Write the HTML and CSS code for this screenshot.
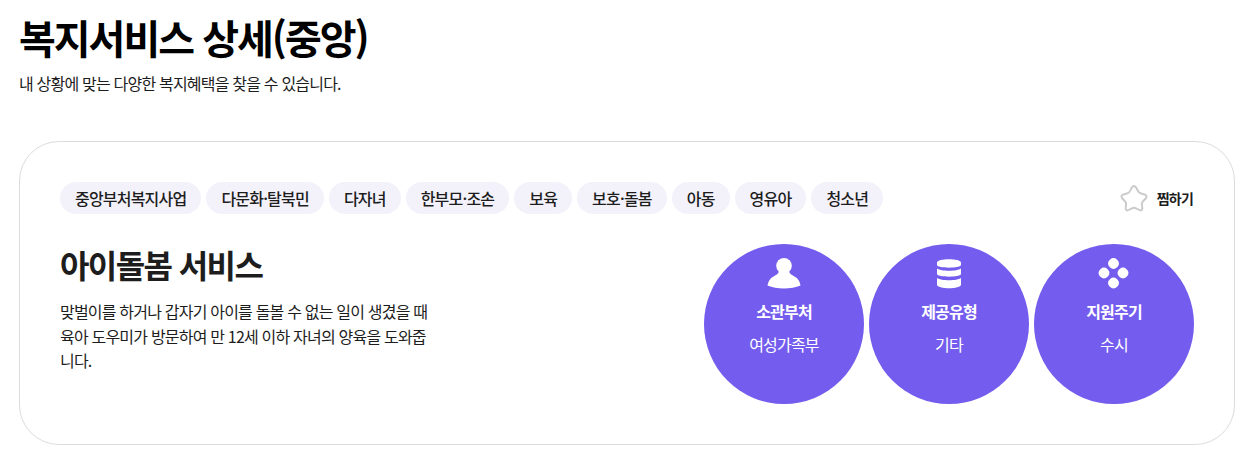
FILE: index.html
```html
<!DOCTYPE html>
<html lang="ko">
<head>
<meta charset="utf-8">
<title>복지서비스 상세(중앙)</title>
<link rel="stylesheet" href="styles.css">
</head>
<body>
<header class="head">
<h1 class="title">복지서비스 상세(중앙)</h1>
<p class="sub">내 상황에 맞는 다양한 복지혜택을 찾을 수 있습니다.</p>
</header>
<section class="card">
<div class="toprow">
<ul class="tags">
<li class="tag">중앙부처복지사업</li>
<li class="tag">다문화·탈북민</li>
<li class="tag">다자녀</li>
<li class="tag">한부모·조손</li>
<li class="tag">보육</li>
<li class="tag">보호·돌봄</li>
<li class="tag">아동</li>
<li class="tag">영유아</li>
<li class="tag">청소년</li>
</ul>
<div class="fav">
<svg class="star" viewBox="0 0 28 28" width="28" height="28"><path d="M14 2C15.600 2 16.400 3.600 17.400 6C18.200 8 19 9 21 9.400C24 10 26.600 10.500 26.600 12.400C26.600 14 24.700 15.500 23.200 17C21.700 18.500 21.600 19.500 22 21.500C22.500 24 22.700 26.400 20.800 26.400C19.500 26.400 17.500 25.200 16 24.400C14.700 23.700 13.300 23.700 12 24.400C10.500 25.200 8.500 26.400 7.200 26.400C5.300 26.400 5.500 24 6 21.500C6.400 19.500 6.300 18.500 4.800 17C3.300 15.500 1.400 14 1.400 12.400C1.400 10.500 4 10 7 9.400C9 9 9.800 8 10.600 6C11.600 3.600 12.400 2 14 2Z" fill="#fff" stroke="#cbcbcb" stroke-width="2" stroke-linejoin="round"/></svg>
<span class="favtext">찜하기</span>
</div>
</div>
<div class="body">
<div class="info">
<h2 class="name">아이돌봄 서비스</h2>
<p class="desc">맞벌이를 하거나 갑자기 아이를 돌볼 수 없는 일이 생겼을 때 육아 도우미가 방문하여 만 12세 이하 자녀의 양육을 도와줍니다.</p>
</div>
<div class="circles">
<div class="circle">
<svg class="ico" viewBox="0 0 34 32" width="34" height="32"><circle cx="17" cy="8.800" r="7.800" fill="#fff"/><path d="M12 14h10c.5 2.500 2.500 4 5.500 5.500 3.500 1.800 5.500 5 6 9-9 4-24 4-33 0 .5-4 2.500-7.200 6-9 3-1.500 5-3 5.500-5.500z" fill="#fff"/></svg>
<strong class="ctitle">소관부처</strong>
<span class="cval">여성가족부</span>
</div>
<div class="circle">
<svg class="ico" viewBox="0 0 34 32" width="34" height="32"><path d="M5 5.500C5 1 29 1 29 5.500V8C29 11.500 5 11.500 5 8zM5 11.500C9 14.500 25 14.500 29 11.500V17C29 20.500 5 20.500 5 17zM5 21C9 24 25 24 29 21V27.500C29 32.500 5 32.500 5 27.500z" fill="#fff"/></svg>
<strong class="ctitle">제공유형</strong>
<span class="cval">기타</span>
</div>
<div class="circle">
<svg class="ico" viewBox="0 0 34 32" width="34" height="32"><rect x="11.250" y="1.250" width="10.500" height="10.500" rx="4.700" transform="rotate(45 16.500 6.500)" fill="#fff"/><rect x="11.250" y="20.750" width="10.500" height="10.500" rx="4.700" transform="rotate(45 16.500 26)" fill="#fff"/><rect x="1.750" y="10.750" width="10.500" height="10.500" rx="4.700" transform="rotate(45 7 16)" fill="#fff"/><rect x="20.750" y="10.750" width="10.500" height="10.500" rx="4.700" transform="rotate(45 26 16)" fill="#fff"/></svg>
<strong class="ctitle">지원주기</strong>
<span class="cval">수시</span>
</div>
</div>
</div>
</section>
</body>
</html>
```
FILE: styles.css
```css
* { box-sizing: border-box; }
html, body { margin: 0; padding: 0; }
body {
  background: #fff;
  color: #1d1d1d;
  font-family: "Noto Sans CJK KR", "Noto Sans", sans-serif;
  padding: 0 17px 0 19px;
  overflow: hidden;
  letter-spacing: -0.8px;
}
.head { padding-top: 7px; }
.title {
  margin: 0;
  font-size: 40px;
  line-height: 60px;
  font-weight: 700;
  letter-spacing: -2px;
  color: #000;
}
.sub {
  margin: 0;
  font-size: 16px;
  line-height: 32px;
}
.card {
  margin-top: 42px;
  height: 304px;
  border: 1px solid #dcdcdc;
  border-radius: 40px;
  padding: 40px;
}
.toprow { display: flex; justify-content: space-between; align-items: center; }
.tags { display: flex; gap: 5px; margin: 0; padding: 0; list-style: none; }
.tag {
  height: 32px;
  line-height: 32px;
  padding: 0 15px;
  border-radius: 16px;
  background: #f3f2fb;
  font-size: 16px;
  font-weight: 500;
}
.fav { display: flex; align-items: center; gap: 9px; margin-right: 1px; }
.favtext { font-size: 14px; font-weight: 700; }
.body { display: flex; justify-content: space-between; margin-top: 27px; }
.info { width: 375px; }
.name {
  margin: 0;
  font-size: 32px;
  line-height: 46px;
  font-weight: 700;
  letter-spacing: -1.6px;
}
.desc {
  margin: 12px 0 0;
  font-size: 16px;
  line-height: 24.5px;
  word-break: break-all;
}
.circles { display: flex; gap: 5px; margin-top: 3px; }
.circle {
  width: 160px;
  height: 160px;
  border-radius: 50%;
  background: #735cee;
  color: #fff;
  display: flex;
  flex-direction: column;
  align-items: center;
  padding-top: 13px;
}
.ico { display: block; }
.ctitle { margin-top: 10px; font-size: 16px; line-height: 24px; font-weight: 700; }
.cval { margin-top: 9px; font-size: 16px; line-height: 24px; }
```
